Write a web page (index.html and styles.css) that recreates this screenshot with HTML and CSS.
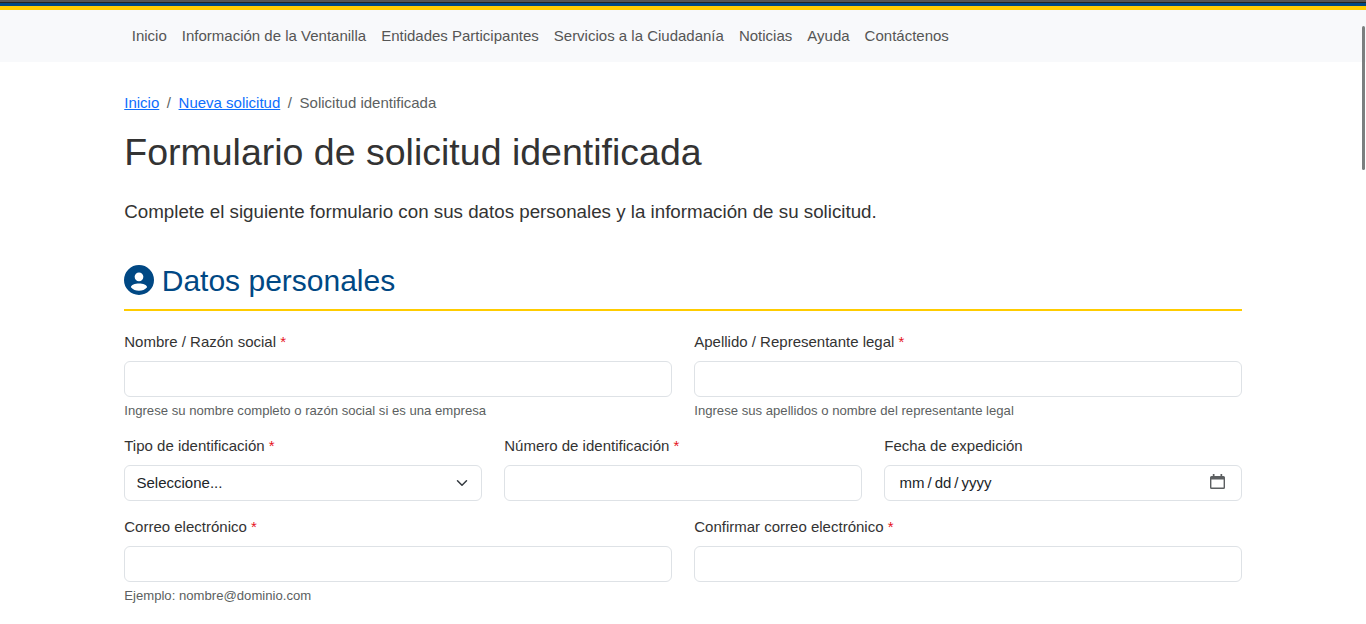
FILE: index.html
```html
<!DOCTYPE html>
<html lang="es">
<head>
<meta charset="utf-8">
<title>Formulario de solicitud identificada</title>
<link rel="stylesheet" href="styles.css">
</head>
<body>
<header class="topbar"></header>
<nav class="navbar">
  <div class="container nav-links">
    <a>Inicio</a><a>Información de la Ventanilla</a><a>Entidades Participantes</a><a>Servicios a la Ciudadanía</a><a>Noticias</a><a>Ayuda</a><a>Contáctenos</a>
  </div>
</nav>
<main class="container">
  <div class="breadcrumb"><a href="#">Inicio</a><span class="sep">/</span><a href="#">Nueva solicitud</a><span class="sep">/</span><span>Solicitud identificada</span></div>
  <h1>Formulario de solicitud identificada</h1>
  <p class="lead">Complete el siguiente formulario con sus datos personales y la información de su solicitud.</p>
  <h2>
    <svg class="user-icon" viewBox="2 2 20 20"><path fill="currentColor" fill-rule="evenodd" d="M12 2a10 10 0 1 0 0 20a10 10 0 1 0 0-20zM12 7a2.900 2.900 0 1 1 0 5.800a2.900 2.900 0 1 1 0-5.800zM12 14.400c2.600 0 5.400 1 5.400 2.500c-1.300 1.700-3.300 2.300-5.400 2.300s-4.100-.6-5.400-2.300c0-1.500 2.800-2.500 5.400-2.500z"/></svg>
    <span>Datos personales</span>
  </h2>
  <form>
    <div class="row two">
      <div class="field"><label>Nombre / Razón social <b>*</b></label><div class="control"></div><small>Ingrese su nombre completo o razón social si es una empresa</small></div>
      <div class="field"><label>Apellido / Representante legal <b>*</b></label><div class="control"></div><small>Ingrese sus apellidos o nombre del representante legal</small></div>
    </div>
    <div class="row three">
      <div class="field"><label>Tipo de identificación <b>*</b></label><div class="control select">Seleccione...<svg class="chevron" viewBox="0 0 16 16"><path fill="none" stroke="#343a40" stroke-linecap="round" stroke-linejoin="round" stroke-width="2" d="m2 5 6 6 6-6"/></svg></div></div>
      <div class="field"><label>Número de identificación <b>*</b></label><div class="control"></div></div>
      <div class="field"><label>Fecha de expedición</label><div class="control date"><span class="date-parts"><span>mm</span><span>/</span><span>dd</span><span>/</span><span>yyyy</span></span><svg class="calendar" viewBox="0 0 15 15"><path fill="currentColor" fill-rule="evenodd" d="M2.800 0h1.700v2h6V0h1.700v2h1.300Q15 2 15 3.500v10q0 1.500-1.500 1.500h-12Q0 15 0 13.500v-10Q0 2 1.500 2h1.300zM1.400 5.400v8.200h12.200V5.400z"/></svg></div></div>
    </div>
    <div class="row two">
      <div class="field"><label>Correo electrónico <b>*</b></label><div class="control"></div><small>Ejemplo: nombre@dominio.com</small></div>
      <div class="field"><label>Confirmar correo electrónico <b>*</b></label><div class="control"></div></div>
    </div>
  </form>
</main>
<div class="scroll-thumb"></div>
</body>
</html>
```
FILE: styles.css
```css
* { box-sizing: border-box; }
body { margin: 0; height: 624px; overflow: hidden; background: #fff; color: #333; font: 15px/24px "Liberation Sans", Arial, sans-serif; }
.container { width: 1117.5px; margin: 0 auto; }
.topbar { height: 10px; background: linear-gradient(#555 2px, #222 2px, #222 3px, #004884 3px); border-bottom: 4px solid #fc0; }
.navbar { height: 52px; background: #f8f9fb; }
.nav-links { display: flex; gap: 15.04px; padding: 14px 7.5px 0; color: #555; white-space: nowrap; }
.breadcrumb { display: flex; margin-top: 29px; color: #5c5f61; }
.breadcrumb a { color: #0d6efd; }
.sep { padding: 0 7.55px; }
h1 { margin: 14px 0 0; font-size: 37.5px; font-weight: 400; line-height: 46px; }
.lead { margin: 23px 0 0; font-size: 18.76px; line-height: 28px; }
h2 { display: flex; align-items: center; gap: 7.5px; height: 52px; margin: 33px 0 20px; padding-bottom: 9px; border-bottom: 2px solid #fc0; color: #004884; font-size: 30px; font-weight: 400; line-height: 36px; }
h2 span { padding-top: 2px; }
.user-icon { width: 30px; height: 30px; }
.row { display: grid; column-gap: 22.5px; }
.two { grid-template-columns: 1fr 1fr; height: 104px; }
.three { grid-template-columns: 1fr 1fr 1fr; height: 81px; }
.field { display: flex; flex-direction: column; }
label { height: 30px; line-height: 22px; }
label b { color: #e6141e; font-weight: 400; }
.control { display: flex; align-items: center; height: 36px; flex: none; border: 1px solid #dee2e6; border-radius: 6px; background: #fff; color: #212529; }
small { margin-top: 4px; font-size: 13.14px; line-height: 20px; color: #5c5f61; }
.select, .date { justify-content: space-between; padding: 0 13px 0 11.25px; }
.chevron { width: 12px; height: 12px; }
.date { padding: 0 16px 0 14.25px; }
.date-parts { display: flex; gap: 3px; }
.calendar { width: 15px; height: 15px; margin-top: -3px; color: #5c5f61; }
.scroll-thumb { position: absolute; top: 26px; right: 1px; width: 3px; height: 144px; border-radius: 2px; background: #7b7f7f; }
```
